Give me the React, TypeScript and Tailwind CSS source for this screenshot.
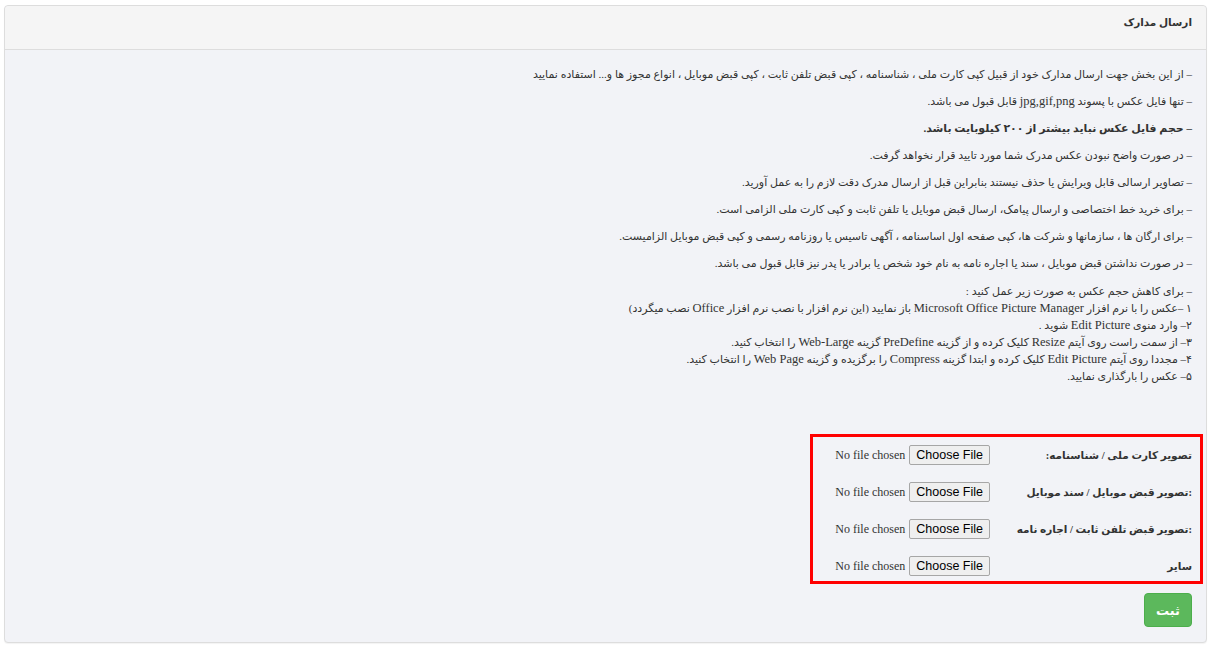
import React from 'react';

const fa = { fontFamily: '"Liberation Serif", "DejaVu Sans", serif' };

const notes = [
  'از این بخش جهت ارسال مدارک خود از قبیل کپی کارت ملی ، شناسنامه ، کپی قبض تلفن ثابت ، کپی قبض موبایل ، انواع مجوز ها و... استفاده نمایید',
  'تنها فایل عکس با پسوند jpg,gif,png قابل قبول می باشد.',
  'حجم فایل عکس نباید بیشتر از ۲۰۰ کیلوبایت باشد.',
  'در صورت واضح نبودن عکس مدرک شما مورد تایید قرار نخواهد گرفت.',
  'تصاویر ارسالی قابل ویرایش یا حذف نیستند بنابراین قبل از ارسال مدرک دقت لازم را به عمل آورید.',
  'برای خرید خط اختصاصی و ارسال پیامک، ارسال قبض موبایل یا تلفن ثابت و کپی کارت ملی الزامی است.',
  'برای ارگان ها ، سازمانها و شرکت ها، کپی صفحه اول اساسنامه ، آگهی تاسیس یا روزنامه رسمی و کپی قبض موبایل الزامیست.',
  'در صورت نداشتن قبض موبایل ، سند یا اجاره نامه به نام خود شخص یا برادر یا پدر نیز قابل قبول می باشد.',
];

const steps = [
  '– برای کاهش حجم عکس به صورت زیر عمل کنید :',
  '۱ –عکس را با نرم افزار Microsoft Office Picture Manager باز نمایید (این نرم افزار با نصب نرم افزار Office نصب میگردد)',
  '۲– وارد منوی Edit Picture شوید .',
  '۳– از سمت راست روی آیتم Resize کلیک کرده و از گزینه PreDefine گزینه Web-Large را انتخاب کنید.',
  '۴– مجددا روی آیتم Edit Picture کلیک کرده و ابتدا گزینه Compress را برگزیده و گزینه Web Page را انتخاب کنید.',
  '۵– عکس را بارگذاری نمایید.',
];

const fields = [
  'تصویر کارت ملی / شناسنامه:',
  ':تصویر قبض موبایل / سند موبایل',
  ':تصویر قبض تلفن ثابت / اجاره نامه',
  'سایر',
];

// latin words in the source render in the serif fallback, a bit larger
const Mixed = ({ text }: { text: string }) => (
  <>
    {text.split(/([A-Za-z][A-Za-z,\- ]*[A-Za-z])/).map((part, i) =>
      /[A-Za-z]/.test(part) ? (
        <span key={i} className="text-[12.5px]">
          {part}
        </span>
      ) : (
        part
      )
    )}
  </>
);

const FileInput = () => (
  <div className="flex items-center gap-[4px]">
    <span
      className="h-[20px] px-[6px] flex items-center rounded-[2px] border border-[#a6a6a6] bg-[#efefef] text-[12.5px] text-black"
      style={{ fontFamily: '"Liberation Sans", Arial, sans-serif' }}
    >
      Choose File
    </span>
    <span className="text-[12px] text-[#333]" style={{ fontFamily: '"Liberation Serif", serif' }}>
      No file chosen
    </span>
  </div>
);

export default function App() {
  return (
    <div dir="rtl" className="min-h-[649px] bg-white pt-[5px] pl-[4px] pr-[5px]" style={fa}>
      <div className="rounded-[4px] border border-[#dddddd] bg-[#f2f3f7] shadow-[0_1px_1px_rgba(0,0,0,0.05)]">
        <div className="h-[44px] rounded-t-[4px] border-b border-[#dddddd] bg-[#f5f5f5] px-[14px] pt-[7px]">
          <h3 className="text-[10.5px] font-bold leading-[20px] text-[#333]">ارسال مدارک</h3>
        </div>

        <div className="px-[14px] pt-[16px] pb-[15px] text-[11px] leading-[17px] text-[#333]">
          {notes.map((n, i) => (
            <p key={i} className={`mb-[10px] ${i === 2 ? 'font-bold' : ''}`}>
              – <Mixed text={n} />
            </p>
          ))}
          <p className="mt-[11px]">
            {steps.map((s, i) => (
              <span key={i} className="block h-[17px]">
                <Mixed text={s} />
              </span>
            ))}
          </p>

          <div className="mt-[49px] mr-[-11px] w-[393px] border-[3px] border-[#ff0000] pt-[8px] pb-[5px] pr-[8px]">
            <div className="flex flex-col gap-[17px]">
              {fields.map((f) => (
                <div key={f} className="flex h-[20px] items-center">
                  <label className="w-[202px] text-[10.5px] font-bold text-[#333]">{f}</label>
                  <FileInput />
                </div>
              ))}
            </div>
          </div>

          <div className="mt-[9px] flex">
            <button className="h-[34px] w-[48px] rounded-[4px] border border-[#4cae4c] bg-[#5cb85c] text-[13px] font-bold text-white">
              ثبت
            </button>
          </div>
        </div>
      </div>
    </div>
  );
}
